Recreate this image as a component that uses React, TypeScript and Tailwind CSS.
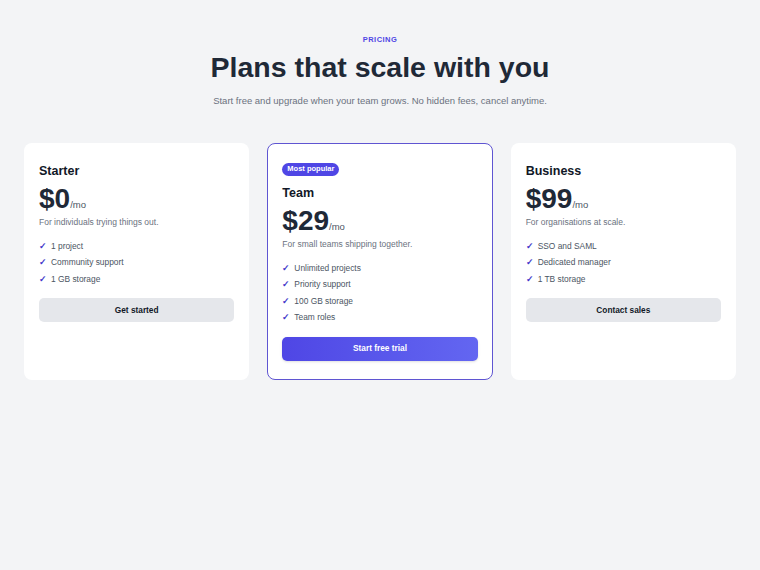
type Plan = {
  name: string;
  price: string;
  blurb: string;
  features: string[];
  cta: string;
  featured?: boolean;
};

const PLANS: Plan[] = [
  {
    name: "Starter",
    price: "$0",
    blurb: "For individuals trying things out.",
    features: ["1 project", "Community support", "1 GB storage"],
    cta: "Get started",
  },
  {
    name: "Team",
    price: "$29",
    blurb: "For small teams shipping together.",
    features: ["Unlimited projects", "Priority support", "100 GB storage", "Team roles"],
    cta: "Start free trial",
    featured: true,
  },
  {
    name: "Business",
    price: "$99",
    blurb: "For organisations at scale.",
    features: ["SSO and SAML", "Dedicated manager", "1 TB storage"],
    cta: "Contact sales",
  },
];

function PlanCard({ plan }: { plan: Plan }) {
  return (
    <div
      className={
        "flex flex-col rounded-lg border-[1.5px] bg-white px-[14px] pt-[18.5px] pb-[18.5px] " +
        (plan.featured ? "border-[#5f55d2]" : "border-transparent")
      }
    >
      {plan.featured && (
        <span className="mb-[9px] flex h-[13px] items-center self-start rounded-full bg-[#4f46e5] px-[5px] text-[7.5px] font-bold text-white">
          Most popular
        </span>
      )}
      <h3 className="text-[12.5px] leading-4 font-bold text-[#111827]">{plan.name}</h3>
      <div className="mt-[4px] flex items-baseline">
        <span className="text-[28px] leading-8 font-bold text-[#1f2937]">{plan.price}</span>
        <span className="text-[9.5px] font-medium text-[#4b5563]">/mo</span>
      </div>
      <p className="mt-[1px] text-[8.5px] leading-3 text-[#6b7280]">{plan.blurb}</p>
      <ul className="mt-[10px] flex flex-col">
        {plan.features.map((f) => (
          <li key={f} className="flex items-center gap-[5px] text-[8.4px] leading-[16.5px] text-[#4b5563]">
            <span className="w-[7px] text-[9px] font-bold text-[#4338ca]">✓</span>
            {f}
          </li>
        ))}
      </ul>
      <button
        className={
          "mt-[11px] h-6 rounded-[5px] text-[8.3px] font-bold " +
          (plan.featured
            ? "bg-gradient-to-r from-[#4f46e5] to-[#6366f1] text-white shadow-sm"
            : "bg-[#e5e7eb] text-[#111827]")
        }
      >
        {plan.cta}
      </button>
    </div>
  );
}

export default function App() {
  return (
    <div className="min-h-[570px] bg-[#f3f4f6] px-6 pt-[35px] font-['Liberation_Sans',Arial,sans-serif]">
      <div className="text-center">
        <p className="text-[7.5px] leading-[10px] font-bold tracking-[0.06em] text-[#4f46e5]">PRICING</p>
        <h1 className="mt-[4px] text-[28.5px] leading-9 font-bold text-[#1f2937]">Plans that scale with you</h1>
        <p className="mt-[9px] text-[9.5px] leading-[14px] text-[#6b7280]">
          Start free and upgrade when your team grows. No hidden fees, cancel anytime.
        </p>
      </div>
      <div className="mt-[35px] grid grid-cols-3 gap-[18px]">
        {PLANS.map((p) => (
          <PlanCard key={p.name} plan={p} />
        ))}
      </div>
    </div>
  );
}
